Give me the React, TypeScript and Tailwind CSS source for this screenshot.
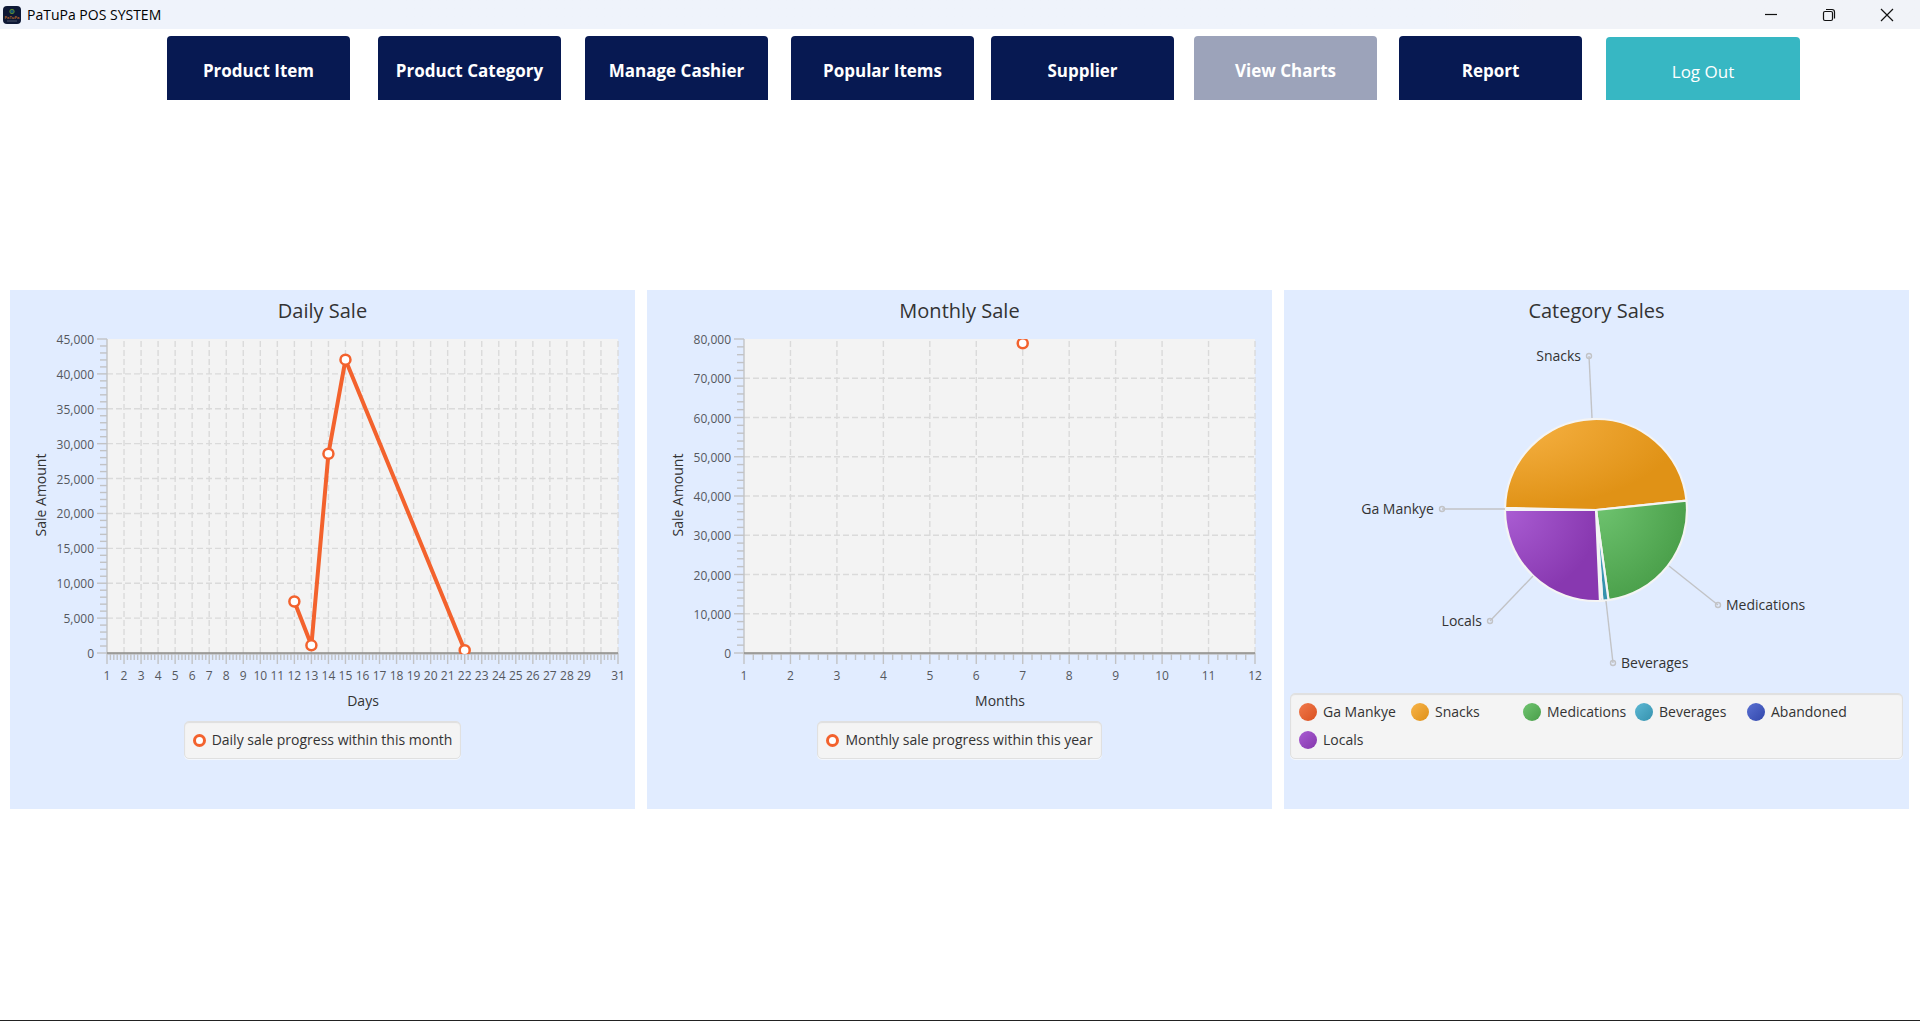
import React from "react";

type Point = { x: number; y: number };

const PLOT = { left: 97, right: 608, top: 49, bottom: 363 };

const navItems = [
  { label: "Product Item", spacing: "", state: "bg-[#071952]" },
  { label: "Product Category", spacing: "ml-7", state: "bg-[#071952]" },
  { label: "Manage Cashier", spacing: "ml-6", state: "bg-[#071952]" },
  { label: "Popular Items", spacing: "ml-[23px]", state: "bg-[#071952]" },
  { label: "Supplier", spacing: "ml-[17px]", state: "bg-[#071952]" },
  { label: "View Charts", spacing: "ml-5", state: "bg-[#9ca3ba]" },
  { label: "Report", spacing: "ml-[22px]", state: "bg-[#071952]" },
];

function TitleBar() {
  return (
    <header className="flex h-[29px] items-center justify-between bg-linear-to-r from-[#eff3fb] from-75% to-[#f1f3f8] to-80%">
      <div className="flex items-center gap-1.5 pl-[3px]">
        <svg width="18" height="18" viewBox="0 0 18 18" aria-hidden="true">
          <rect width="18" height="18" rx="4" fill="#0d1836" />
          <circle cx="9" cy="5.5" r="2.2" fill="#14506e" stroke="#5f8a2e" strokeWidth="1" />
          <text x="9" y="13" fontSize="4" fontWeight="700" textAnchor="middle" fill="#b0622a">
            PaTuPa
          </text>
          <path d="M4 15h10" stroke="#5b6377" strokeWidth="0.8" />
        </svg>
        <h1 className="text-[14px] leading-5 text-black">PaTuPa POS SYSTEM</h1>
      </div>
      <div className="flex h-full pr-1">
        <button aria-label="Minimize" className="flex w-[58px] items-center justify-center">
          <svg width="14" height="14" viewBox="0 0 14 14" fill="none" stroke="#111" strokeWidth="1.2">
            <path d="M1 6.5h12" />
          </svg>
        </button>
        <button aria-label="Restore" className="flex w-[58px] items-center justify-center">
          <svg width="14" height="14" viewBox="0 0 14 14" fill="none" stroke="#111" strokeWidth="1.2">
            <rect x="1.5" y="3.5" width="9" height="9" rx="1.5" />
            <path d="M4 1.5h6a2.5 2.5 0 0 1 2.5 2.5v6.5" />
          </svg>
        </button>
        <button aria-label="Close" className="flex w-[58px] items-center justify-center">
          <svg width="14" height="14" viewBox="0 0 14 14" fill="none" stroke="#111" strokeWidth="1.2">
            <path d="M1 1l12 12M13 1L1 13" />
          </svg>
        </button>
      </div>
    </header>
  );
}

function range(count: number) {
  return Array.from({ length: count }, (_, i) => i);
}

function LineChart(props: {
  id: string;
  xMax: number;
  yMax: number;
  yStep: number;
  xTitle: string;
  hiddenX?: number;
  points: Point[];
}) {
  const { id, xMax, yMax, yStep, xTitle, hiddenX, points } = props;
  const w = PLOT.right - PLOT.left;
  const h = PLOT.bottom - PLOT.top;
  const px = (x: number) => PLOT.left + ((x - 1) / (xMax - 1)) * w;
  const py = (y: number) => PLOT.bottom - (y / yMax) * h;
  const rows = yMax / yStep;
  const cols = xMax - 1;
  return (
    <svg viewBox="0 40 625 384" className="block w-full" role="img" aria-label={`Sale amount by ${xTitle}`}>
      <defs>
        <clipPath id={`${id}-clip`}>
          <rect x={PLOT.left} y={PLOT.top} width={w} height={h + 1} />
        </clipPath>
      </defs>
      <rect x={PLOT.left} y={PLOT.top} width={w} height={h} fill="#f3f3f3" />
      <g stroke="#dadada" strokeWidth="1.4" strokeDasharray="6 3">
        {range(cols).map((i) => (
          <path key={i} d={`M${px(i + 2)} ${PLOT.bottom}V${PLOT.top}`} />
        ))}
        {range(rows - 1).map((i) => (
          <path key={i} d={`M${PLOT.left} ${py((i + 1) * yStep)}H${PLOT.right}`} />
        ))}
      </g>
      <g stroke="#c2c3c5" strokeWidth="1.4">
        {range(rows * 5 + 1).map((i) => (
          <path key={i} d={`M${PLOT.left} ${py((i * yStep) / 5)}h${i % 5 === 0 ? -10 : -7}`} />
        ))}
        {range(cols * 5 + 1).map((i) => (
          <path key={i} d={`M${px(1 + i / 5)} ${PLOT.bottom}v${i % 5 === 0 ? 11 : 7}`} />
        ))}
        <path d={`M${PLOT.left} ${PLOT.top}V${PLOT.bottom}`} />
        <path d={`M${PLOT.left} ${PLOT.bottom + 1}H${PLOT.right}`} />
      </g>
      <path d={`M${PLOT.left} ${PLOT.bottom}H${PLOT.right}`} stroke="#8c8b87" strokeWidth="1.4" />
      <g fontSize="12" fill="#55585e">
        {range(rows + 1).map((i) => (
          <text key={i} x="84" y={py(i * yStep) + 5} textAnchor="end">
            {(i * yStep).toLocaleString("en-US")}
          </text>
        ))}
        {range(xMax)
          .filter((i) => i + 1 !== hiddenX)
          .map((i) => (
            <text key={i} x={px(i + 1)} y="390" textAnchor="middle">
              {i + 1}
            </text>
          ))}
      </g>
      <g fontSize="14" fill="#333" textAnchor="middle">
        <text x="353" y="416">
          {xTitle}
        </text>
        <text transform="translate(36 205) rotate(-90)">Sale Amount</text>
      </g>
      <g clipPath={`url(#${id}-clip)`} stroke="#f3622d">
        <path
          d={points.map((p, i) => `${i ? "L" : "M"}${px(p.x)} ${py(p.y)}`).join("")}
          fill="none"
          strokeWidth="4"
          strokeLinejoin="bevel"
        />
        {points.map((p) => (
          <circle key={p.x} cx={px(p.x)} cy={py(p.y)} r="5" fill="#fff" strokeWidth="2.5" />
        ))}
      </g>
    </svg>
  );
}

const slices = [
  { name: "Ga Mankye", from: 178.7, to: 180, light: "#f17a4b", dark: "#d9501e", swatch: "from-[#f17a4b] to-[#d9501e]" },
  { name: "Snacks", from: 5.9, to: 178.7, light: "#f8b447", dark: "#e09216", swatch: "from-[#f8b447] to-[#de9013]" },
  { name: "Medications", from: -82.1, to: 5.9, light: "#70c571", dark: "#4ca14c", swatch: "from-[#70c571] to-[#499e49]" },
  { name: "Beverages", from: -86, to: -82.1, light: "#5cb8d4", dark: "#3592ae", swatch: "from-[#5cb8d4] to-[#3592ae]" },
  { name: "Abandoned", from: -87.5, to: -86, light: "#5a70d2", dark: "#3247ab", swatch: "from-[#5a70d2] to-[#3247ab]" },
  { name: "Locals", from: -180, to: -87.5, light: "#aa5dd3", dark: "#8838b0", swatch: "from-[#aa5dd3] to-[#8436ac]" },
];

const callouts = [
  { name: "Snacks", x: 305, y: 66, toX: 308, toY: 128, side: "end" },
  { name: "Ga Mankye", x: 158, y: 219, toX: 221, toY: 219, side: "end" },
  { name: "Locals", x: 206, y: 331, toX: 249, toY: 286, side: "end" },
  { name: "Beverages", x: 329, y: 373, toX: 322, toY: 311, side: "start" },
  { name: "Medications", x: 434, y: 315, toX: 385, toY: 276, side: "start" },
] as const;

function PieChart() {
  const cx = 312;
  const cy = 220;
  const r = 91;
  const at = (deg: number) => {
    const a = (deg * Math.PI) / 180;
    return `${cx + r * Math.cos(a)} ${cy - r * Math.sin(a)}`;
  };
  return (
    <svg viewBox="0 40 625 356" className="block w-full" role="img" aria-label="Sales share by category">
      <defs>
        {slices.map((s, i) => (
          <radialGradient key={s.name} id={`slice-${i}`} cx="0" cy="0" r="1">
            <stop offset="0" stopColor={s.light} />
            <stop offset="1" stopColor={s.dark} />
          </radialGradient>
        ))}
      </defs>
      {slices.map((s, i) => (
        <path
          key={s.name}
          d={`M${cx} ${cy}L${at(s.from)}A${r} ${r} 0 0 0 ${at(s.to)}Z`}
          fill={`url(#slice-${i})`}
          stroke="#f4f4f4"
          strokeWidth="2.2"
          strokeLinejoin="bevel"
        />
      ))}
      {callouts.map((c) => (
        <g key={c.name}>
          <g stroke="#c2c3c6" strokeWidth="1.4" fill="none">
            <path d={`M${c.x} ${c.y}L${c.toX} ${c.toY}`} />
            <circle cx={c.x} cy={c.y} r="2.5" />
          </g>
          <text x={c.side === "end" ? c.x - 8 : c.x + 8} y={c.y + 5} textAnchor={c.side} fontSize="14" fill="#333">
            {c.name}
          </text>
        </g>
      ))}
    </svg>
  );
}

function Panel({ title, children }: { title: string; children: React.ReactNode }) {
  return (
    <section className="flex min-w-0 flex-col bg-[#e1ecff] pb-[50px]">
      <h2 className="h-10 pt-[7px] text-center text-[20px] leading-7 text-[#333]">{title}</h2>
      {children}
    </section>
  );
}

const legendBox =
  "rounded-[5px] border border-[#e0e0e0] bg-[#f4f4f4] text-[14px] leading-7 text-[#333] shadow-[0_1px_0_#f4f7fc,inset_0_1px_1px_#dedede]";

function LineLegend({ label }: { label: string }) {
  return (
    <div className={`mx-auto mt-[7px] flex h-[38px] items-center gap-1.5 px-2 ${legendBox}`}>
      <span className="size-[13px] rounded-full border-3 border-[#f3622d] bg-white" />
      {label}
    </div>
  );
}

export default function App() {
  return (
    <div className="flex min-h-screen flex-col border-b border-[#222] bg-white font-['Open_Sans',sans-serif]">
      <TitleBar />
      <nav className="flex items-end pt-[7px] pr-[6%] pl-[167px]">
        {navItems.map((item) => (
          <button
            key={item.label}
            className={`h-16 w-[183px] rounded-t pt-1.5 text-[17px] font-bold text-white ${item.spacing} ${item.state}`}
          >
            {item.label}
          </button>
        ))}
        <button className="ml-6 h-[63px] w-[194px] rounded-t bg-[#37b7c3] pt-1.5 text-[17px] text-white">Log Out</button>
      </nav>
      <main className="mt-[190px] grid grid-cols-3 gap-3 pr-[11px] pl-2.5">
        <Panel title="Daily Sale">
          <LineChart
            id="daily"
            xMax={31}
            yMax={45000}
            yStep={5000}
            xTitle="Days"
            hiddenX={30}
            points={[
              { x: 12, y: 7380 },
              { x: 13, y: 1100 },
              { x: 14, y: 28560 },
              { x: 15, y: 42040 },
              { x: 22, y: 400 },
            ]}
          />
          <LineLegend label="Daily sale progress within this month" />
        </Panel>
        <Panel title="Monthly Sale">
          <LineChart
            id="monthly"
            xMax={12}
            yMax={80000}
            yStep={10000}
            xTitle="Months"
            points={[{ x: 7, y: 78900 }]}
          />
          <LineLegend label="Monthly sale progress within this year" />
        </Panel>
        <Panel title="Category Sales">
          <PieChart />
          <ul className={`mx-1.5 mt-[7px] flex flex-wrap px-2 py-1 ${legendBox}`}>
            {slices.map((s) => (
              <li key={s.name} className="flex w-28 items-center gap-1.5 whitespace-nowrap">
                <span className={`size-[18px] shrink-0 rounded-full bg-linear-to-br ${s.swatch}`} />
                {s.name}
              </li>
            ))}
          </ul>
        </Panel>
      </main>
    </div>
  );
}
